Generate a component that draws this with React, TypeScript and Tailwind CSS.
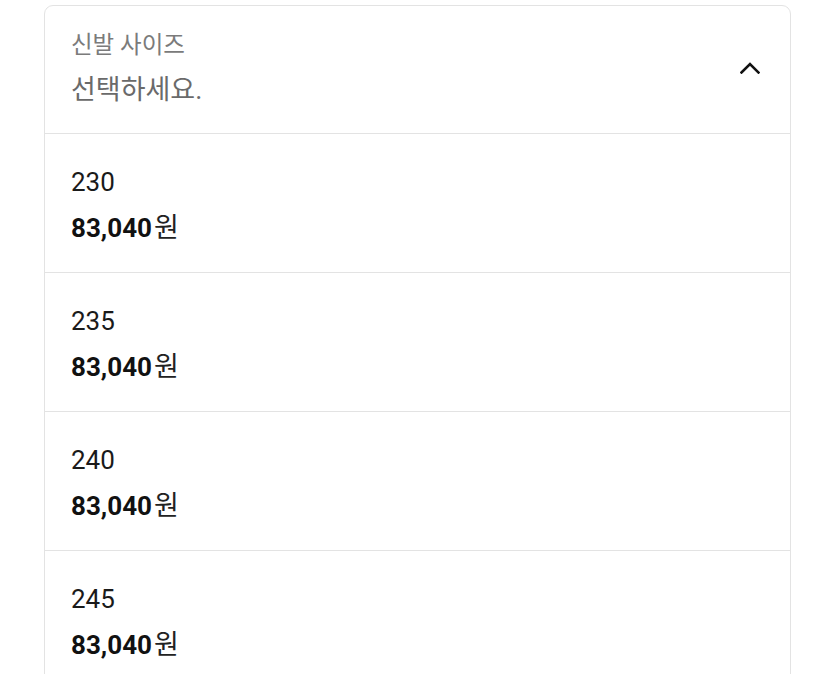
import React from "react";

const sizes = ["230", "235", "240", "245", "250", "255"];

export default function App() {
  return (
    <div
      className="h-[674px] w-full overflow-hidden bg-white"
      style={{ fontFamily: 'Roboto, "Noto Sans CJK KR", sans-serif' }}
    >
      <div className="mx-[44px] mt-[5px] rounded-[9px] border border-[#e3e3e3] bg-white">
        <div className="flex items-center justify-between pb-[25px] pt-[24px] pl-[26px] pr-[30px]">
          <div className="flex flex-col gap-[12px]">
            <span className="text-[23.5px] leading-[30px] text-[#7b7b7b]">신발 사이즈</span>
            <span className="text-[27px] leading-[36px] text-[#6a6a6a]">선택하세요.</span>
          </div>
          <svg width="20" height="12" viewBox="0 0 20 12" fill="none" className="mb-[2px]">
            <path d="M1.5 10.5 L10 2 L18.5 10.5" stroke="#111" strokeWidth="2.6" strokeLinecap="square" />
          </svg>
        </div>
        {sizes.map((s) => (
          <div
            key={s}
            className="flex flex-col gap-[12px] border-t border-[#e3e3e3] pb-[27px] pl-[26px] pt-[31px]"
          >
            <span className="h-[34px] text-[26px] leading-[34px] text-[#1a1a1a]">{s}</span>
            <span className="flex h-[34px] items-baseline text-[26px] leading-[34px] text-[#111]">
              <span className="font-bold">83,040</span>
              <span className="ml-[2px] text-[27px] leading-[34px] text-[#222]">원</span>
            </span>
          </div>
        ))}
      </div>
    </div>
  );
}
